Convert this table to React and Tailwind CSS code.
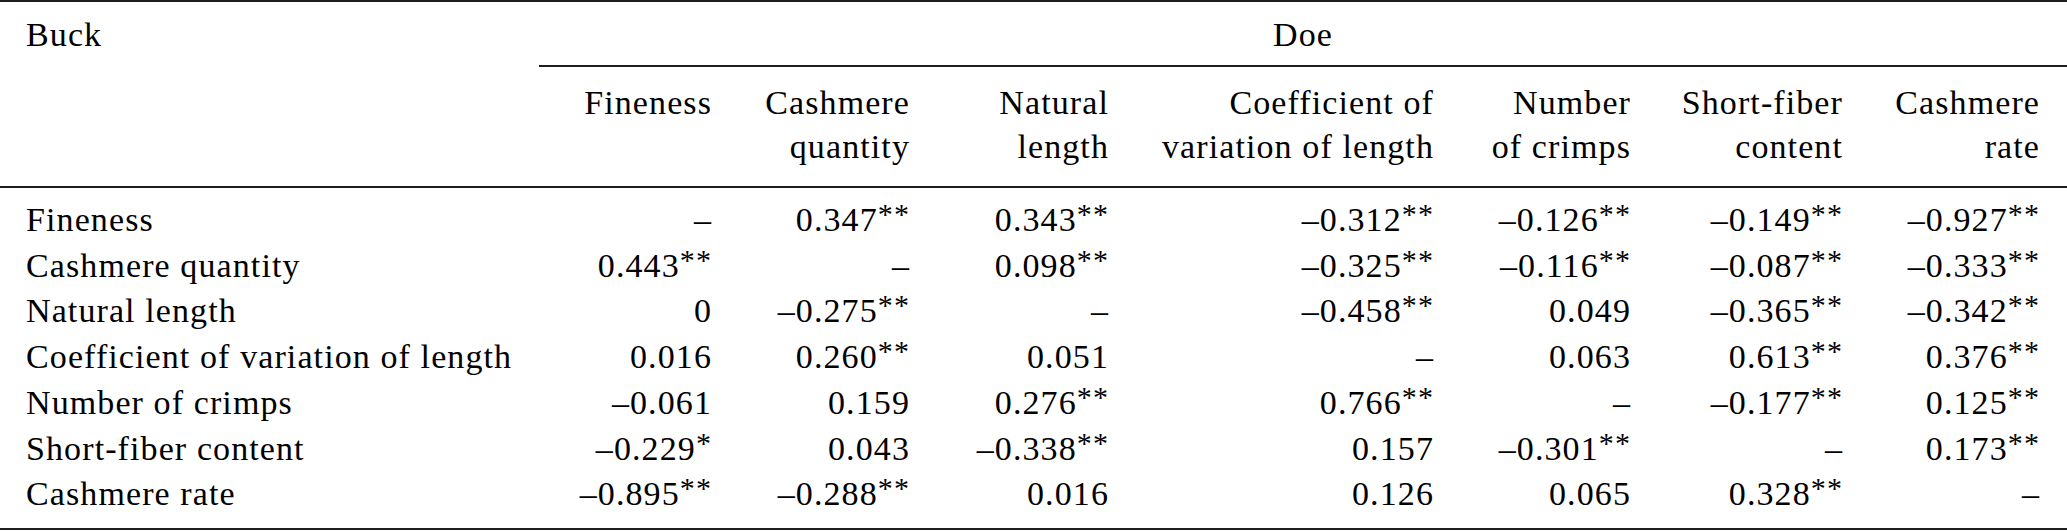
const cols = ['Fineness', 'Cashmere quantity', 'Natural length', 'Coefficient of variation of length', 'Number of crimps', 'Short-fiber content', 'Cashmere rate']

const heads = [
  ['Fineness'],
  ['Cashmere', 'quantity'],
  ['Natural', 'length'],
  ['Coefficient of', 'variation of length'],
  ['Number', 'of crimps'],
  ['Short-fiber', 'content'],
  ['Cashmere', 'rate'],
]

const rows = [
  ['–', '0.347**', '0.343**', '–0.312**', '–0.126**', '–0.149**', '–0.927**'],
  ['0.443**', '–', '0.098**', '–0.325**', '–0.116**', '–0.087**', '–0.333**'],
  ['0', '–0.275**', '–', '–0.458**', '0.049', '–0.365**', '–0.342**'],
  ['0.016', '0.260**', '0.051', '–', '0.063', '0.613**', '0.376**'],
  ['–0.061', '0.159', '0.276**', '0.766**', '–', '–0.177**', '0.125**'],
  ['–0.229*', '0.043', '–0.338**', '0.157', '–0.301**', '–', '0.173**'],
  ['–0.895**', '–0.288**', '0.016', '0.126', '0.065', '0.328**', '–'],
]

function Val({ v }) {
  // split trailing stars so they sit raised like a superscript
  const m = v.match(/^(.*?)(\*+)$/)
  if (!m) return <span>{v}</span>
  return (
    <span>
      {m[1]}
      <span className="relative -top-[7px] text-[30px] leading-none">{m[2]}</span>
    </span>
  )
}

export default function App() {
  return (
    <div className="w-[2067px] h-[532px] bg-white text-black font-['Liberation_Serif','Times_New_Roman',serif] text-[34px] tracking-[1.1px]">
      <table className="table-fixed border-collapse w-[2067px] border-t-2 border-b-2 border-[#1e1e1e]">
        <colgroup>
          <col className="w-[539px]" />
          <col className="w-[200px]" />
          <col className="w-[198px]" />
          <col className="w-[199px]" />
          <col className="w-[325px]" />
          <col className="w-[197px]" />
          <col className="w-[212px]" />
          <col className="w-[197px]" />
        </colgroup>
        <thead>
          <tr>
            <th className="text-left font-normal align-top pl-[26px] pt-[10px] leading-[46px]">Buck</th>
            <th colSpan={7} className="font-normal align-top p-0">
              <div className="text-center leading-[46px] pt-[10px] pb-[7px] border-b-2 border-[#1e1e1e]">Doe</div>
            </th>
          </tr>
          <tr className="border-b-2 border-[#1e1e1e]">
            <th />
            {heads.map((h, i) => (
              <th key={i} className="font-normal text-right align-top pr-[27px] pt-[14px] pb-[17px] leading-[44px] whitespace-nowrap">
                {h.map((line, j) => (
                  <div key={j}>{line}</div>
                ))}
              </th>
            ))}
          </tr>
        </thead>
        <tbody>
          {rows.map((r, i) => (
            <tr key={i}>
              <td className={`pl-[26px] leading-[45.7px] whitespace-nowrap ${i === 0 ? 'pt-[9px]' : ''} ${i === rows.length - 1 ? 'pb-[11px]' : ''}`}>
                {cols[i]}
              </td>
              {r.map((v, j) => (
                <td key={j} className={`text-right pr-[27px] leading-[45.7px] whitespace-nowrap ${i === 0 ? 'pt-[9px]' : ''} ${i === rows.length - 1 ? 'pb-[11px]' : ''}`}>
                  <Val v={v} />
                </td>
              ))}
            </tr>
          ))}
        </tbody>
      </table>
    </div>
  )
}
